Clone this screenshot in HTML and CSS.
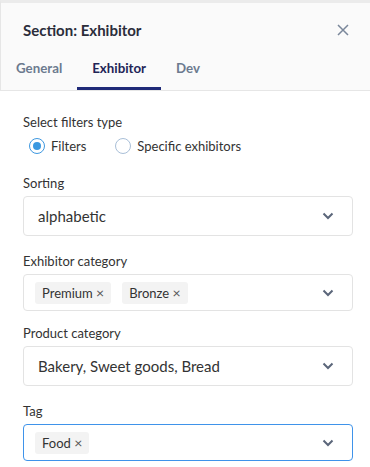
FILE: index.html
```html
<!DOCTYPE html>
<html>
<head>
<meta charset="utf-8">
<link rel="stylesheet" href="styles.css">
</head>
<body>
<div class="panel">
  <div class="header">
    <div class="title-row">
      <h1 class="title">Section: Exhibitor</h1>
      <svg class="close" width="12" height="12" viewBox="0 0 12 12"><path d="M1 1L11 11M11 1L1 11" stroke="#7a879a" stroke-width="1.5" fill="none"/></svg>
    </div>
    <div class="tabs">
      <div class="tab">General</div>
      <div class="tab active">Exhibitor</div>
      <div class="tab">Dev</div>
    </div>
  </div>
  <div class="content">
    <div class="field field-radio">
      <div class="label">Select filters type</div>
      <div class="radios">
        <label class="radio"><span class="dot checked"></span>Filters</label>
        <label class="radio"><span class="dot"></span>Specific exhibitors</label>
      </div>
    </div>
    <div class="field">
      <div class="label">Sorting</div>
      <div class="select">
        <span class="value">alphabetic</span>
        <svg class="chev" width="12" height="8" viewBox="0 0 12 8"><path d="M1.5 1.5L6 6L10.5 1.5" stroke="#5b667a" stroke-width="2" fill="none"/></svg>
      </div>
    </div>
    <div class="field field-multi">
      <div class="label">Exhibitor category</div>
      <div class="select multi">
        <div class="chips">
          <span class="chip">Premium <span class="x">×</span></span>
          <span class="chip">Bronze <span class="x">×</span></span>
        </div>
        <svg class="chev" width="12" height="8" viewBox="0 0 12 8"><path d="M1.5 1.5L6 6L10.5 1.5" stroke="#5b667a" stroke-width="2" fill="none"/></svg>
      </div>
    </div>
    <div class="field">
      <div class="label">Product category</div>
      <div class="select">
        <span class="value">Bakery, Sweet goods, Bread</span>
        <svg class="chev" width="12" height="8" viewBox="0 0 12 8"><path d="M1.5 1.5L6 6L10.5 1.5" stroke="#5b667a" stroke-width="2" fill="none"/></svg>
      </div>
    </div>
    <div class="field">
      <div class="label">Tag</div>
      <div class="select multi focus">
        <div class="chips">
          <span class="chip">Food <span class="x">×</span></span>
        </div>
        <svg class="chev" width="12" height="8" viewBox="0 0 12 8"><path d="M1.5 1.5L6 6L10.5 1.5" stroke="#5b667a" stroke-width="2" fill="none"/></svg>
      </div>
    </div>
  </div>
</div>
</body>
</html>
```
FILE: styles.css
```css
* { box-sizing: border-box; }
body {
  margin: 0;
  font-family: Lato, "Open Sans", sans-serif;
  color: #333;
  background: #fff;
}
.header {
  background: #fafafa;
  border-top: 3px solid #ebebeb;
  border-left: 1px solid #e6e6e6;
  border-bottom: 1px solid #e6e6e6;
  height: 91px;
}
.title-row {
  display: flex;
  align-items: center;
  justify-content: space-between;
  height: 54px;
  padding: 0 21px 0 22px;
}
.title {
  margin: 0;
  font-size: 15px;
  font-weight: 700;
  color: #2b2d3a;
}
.close { display: block; }
.tabs {
  display: flex;
  height: 33px;
}
.tab {
  padding: 0 15px 8px;
  font-size: 13.3px;
  font-weight: 700;
  color: #6c7a8f;
  line-height: 22px;
  border-bottom: 3px solid transparent;
}
.tab.active {
  color: #1f2557;
  border-bottom-color: #1f2a78;
}
.content {
  padding: 23px 17px 0 23px;
}
.field { margin-bottom: 17px; }
.field-radio { margin-bottom: 18px; }
.field-multi { margin-bottom: 14px; }
.label {
  font-size: 13px;
  line-height: 16px;
  color: #333;
  margin-bottom: 5px;
}
.radios {
  display: flex;
  gap: 29px;
  padding-left: 6px;
  height: 22px;
  align-items: center;
}
.radio {
  display: flex;
  align-items: center;
  font-size: 13px;
  color: #333;
}
.dot {
  width: 16px;
  height: 16px;
  border-radius: 50%;
  border: 1px solid #a9bfd8;
  margin-right: 6px;
  display: flex;
  align-items: center;
  justify-content: center;
}
.dot.checked { border-color: #3e98e0; }
.dot.checked::after {
  content: "";
  width: 8px;
  height: 8px;
  border-radius: 50%;
  background: #3a98e0;
}
.select {
  display: flex;
  align-items: center;
  justify-content: space-between;
  height: 40px;
  border: 1px solid #e3e3e3;
  border-radius: 4px;
  padding: 0 18px 0 14px;
}
.select.multi {
  height: 37px;
  padding-left: 11px;
}
.select.focus { border-color: #3f93ea; }
.value {
  font-size: 15px;
  color: #333;
}
.chips {
  display: flex;
  gap: 11px;
}
.chip {
  background: #f3f3f3;
  border-radius: 3px;
  height: 22px;
  line-height: 22px;
  padding: 0 7px;
  font-size: 13px;
  color: #333;
}
.chip .x { color: #555; font-size: 14px; }
.chev { display: block; }
```
